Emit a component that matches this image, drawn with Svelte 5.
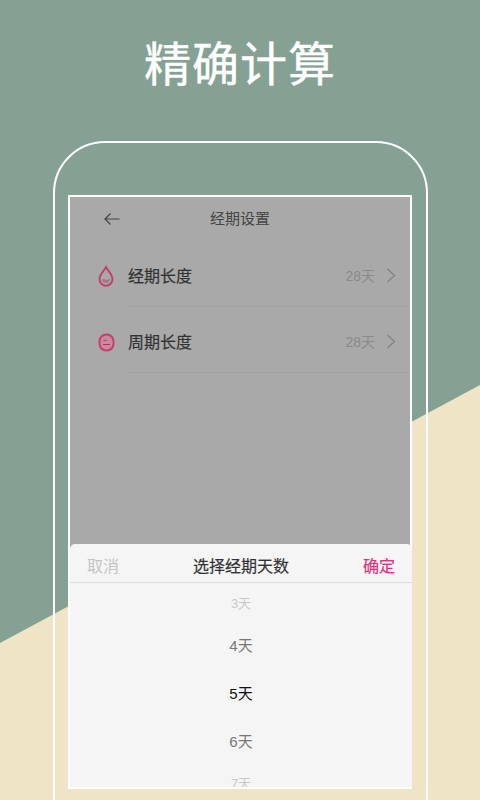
<script lang="ts">
  const rows = [
    { label: '经期长度', value: '28天', icon: 'drop' },
    { label: '周期长度', value: '28天', icon: 'cycle' }
  ];

  const days = [
    { label: '3天', cls: 'far' },
    { label: '4天', cls: 'near' },
    { label: '5天', cls: 'current' },
    { label: '6天', cls: 'near' },
    { label: '7天', cls: 'far' }
  ];
</script>

<div class="page">
  <svg class="backdrop" viewBox="0 0 480 800" aria-hidden="true">
    <polygon points="0,643 480,385 480,800 0,800" fill="#f0e4c6" />
  </svg>

  <h1>精确计算</h1>

  <div class="phone">
    <div class="screen">
      <div class="dimmed">
        <header class="nav">
          <svg class="back" width="18" height="14" viewBox="0 0 18 14">
            <path d="M16.5 7H2M7.5 1.5 2 7l5.5 5.500" fill="none" stroke="#444" stroke-width="1.2" />
          </svg>
          <span>经期设置</span>
        </header>

        <ul class="settings">
          {#each rows as row (row.label)}
            <li>
              <span class="icon">
                {#if row.icon === 'drop'}
                  <svg width="16" height="22" viewBox="0 0 16 22">
                    <path d="M8 2C6.500 5.500 1.500 9 1.500 14.200a6.500 6.500 0 0 0 13 0C14.500 9 9.500 5.500 8 2Z" fill="none" stroke="#c23e6c" stroke-width="1.900" />
                    <path d="M4 14.500c1.500-1.200 2.600-.4 4 .3s2.500-.5 4-1c.2 2.500-1.500 4.300-4 4.300s-4-1.600-4-3.600Z" fill="#a8748a" />
                  </svg>
                {:else}
                  <svg width="17" height="19" viewBox="0 0 17 19">
                    <rect x="0.500" y="0.500" width="16" height="18" rx="7.500" fill="#c6406f" />
                    <rect x="2.500" y="2.500" width="12" height="14" rx="6" fill="#c98a9f" />
                    <path d="M5 11.500h7M5.500 8c1.200-1 2.300-1 3.500 0" fill="none" stroke="#a83560" stroke-width="1" />
                  </svg>
                {/if}
              </span>
              <div class="row-body">
                <span class="row-label">{row.label}</span>
                <span class="row-value">{row.value}</span>
                <svg class="chevron" width="10" height="15" viewBox="0 0 10 15">
                  <path d="M1.500 1l7 6.500-7 6.500" fill="none" stroke="#808080" stroke-width="1.200" />
                </svg>
              </div>
            </li>
          {/each}
        </ul>
      </div>

      <section class="sheet">
        <div class="sheet-head">
          <span class="cancel">取消</span>
          <span class="sheet-title">选择经期天数</span>
          <span class="confirm">确定</span>
        </div>
        <div class="wheel">
          {#each days as day (day.label)}
            <div class="day {day.cls}">{day.label}</div>
          {/each}
        </div>
      </section>
    </div>
  </div>
</div>

<style>
  :global(body) {
    margin: 0;
  }

  .page {
    position: relative;
    width: 480px;
    height: 800px;
    overflow: hidden;
    background: #84a193;
    font-family: "Liberation Sans", "Noto Sans CJK SC", sans-serif;
  }

  .backdrop {
    position: absolute;
    inset: 0;
    width: 480px;
    height: 800px;
  }

  h1 {
    position: relative;
    box-sizing: border-box;
    margin: 0;
    height: 100px;
    padding-top: 30px;
    line-height: 70px;
    font-size: 47px;
    font-weight: 400;
    letter-spacing: 1px;
    color: #fff;
    text-align: center;
    -webkit-text-stroke: 0.4px #fff;
  }

  .phone {
    position: relative;
    box-sizing: border-box;
    width: 375px;
    height: 720px;
    margin: 41px 0 0 53px;
    padding: 52px 13px 0;
    border: 2.500px solid #fff;
    border-radius: 52px;
  }

  .screen {
    box-sizing: border-box;
    display: flex;
    flex-direction: column;
    width: 344px;
    height: 594px;
    border: 2px solid #fff;
    background: #a9a9a9;
  }

  .dimmed {
    flex: 1;
    min-height: 0;
  }

  .nav {
    display: flex;
    align-items: center;
    justify-content: center;
    position: relative;
    box-sizing: border-box;
    height: 44px;
    padding-bottom: 3px;
    font-size: 15px;
    color: #444;
  }

  .back {
    position: absolute;
    left: 33px;
    top: 15px;
  }

  .settings {
    margin: 0;
    padding: 0;
    list-style: none;
  }

  .settings li {
    display: flex;
    height: 66px;
  }

  .icon {
    display: flex;
    align-items: center;
    justify-content: center;
    box-sizing: border-box;
    width: 58px;
    height: 66px;
    padding: 4px 0 0 14px;
  }

  .row-body {
    flex: 1;
    display: flex;
    align-items: center;
    padding: 3px 14px 0 0;
    border-bottom: 1px solid #a2a2a2;
  }

  .row-label {
    flex: 1;
    font-size: 16px;
    color: #333;
    -webkit-text-stroke: 0.2px #333;
  }

  .row-value {
    font-size: 14px;
    color: #8a8a8a;
    margin-right: 11px;
  }

  .sheet {
    flex: none;
    box-sizing: border-box;
    height: 243px;
    margin-right: -2px;
    background: #f5f5f5;
    border-radius: 5px 5px 0 0;
    overflow: hidden;
  }

  .sheet-head {
    display: flex;
    align-items: center;
    justify-content: space-between;
    box-sizing: border-box;
    height: 39px;
    padding: 4px 17px 0 17px;
    border-bottom: 1px solid #dcdcdc;
    font-size: 16px;
  }

  .cancel {
    color: #c4c4c4;
  }

  .sheet-title {
    color: #333;
    -webkit-text-stroke: 0.2px #333;
  }

  .confirm {
    color: #e0337f;
    -webkit-text-stroke: 0.2px #e0337f;
  }

  .wheel {
    display: flex;
    flex-direction: column;
    align-items: center;
    padding-top: 3px;
  }

  .day {
    height: 48px;
    line-height: 48px;
    font-size: 15px;
    color: #777;
  }

  .day.far {
    height: 36px;
    line-height: 36px;
    font-size: 13px;
    color: #c8c8c8;
  }

  .day.current {
    color: #111;
  }
</style>
